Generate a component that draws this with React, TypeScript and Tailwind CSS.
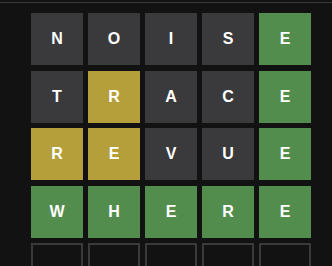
import React from "react"

type Mark = "absent" | "present" | "correct" | "empty"

const rows: { letter: string; mark: Mark }[][] = [
  [
    { letter: "N", mark: "absent" },
    { letter: "O", mark: "absent" },
    { letter: "I", mark: "absent" },
    { letter: "S", mark: "absent" },
    { letter: "E", mark: "correct" },
  ],
  [
    { letter: "T", mark: "absent" },
    { letter: "R", mark: "present" },
    { letter: "A", mark: "absent" },
    { letter: "C", mark: "absent" },
    { letter: "E", mark: "correct" },
  ],
  [
    { letter: "R", mark: "present" },
    { letter: "E", mark: "present" },
    { letter: "V", mark: "absent" },
    { letter: "U", mark: "absent" },
    { letter: "E", mark: "correct" },
  ],
  [
    { letter: "W", mark: "correct" },
    { letter: "H", mark: "correct" },
    { letter: "E", mark: "correct" },
    { letter: "R", mark: "correct" },
    { letter: "E", mark: "correct" },
  ],
  [
    { letter: "", mark: "empty" },
    { letter: "", mark: "empty" },
    { letter: "", mark: "empty" },
    { letter: "", mark: "empty" },
    { letter: "", mark: "empty" },
  ],
]

const tileStyle: Record<Mark, string> = {
  absent: "bg-[#3a3a3c]",
  present: "bg-[#b59f3b]",
  correct: "bg-[#538d4e]",
  empty: "border-2 border-[#3a3a3c]",
}

function Tile(props: { letter: string; mark: Mark }) {
  return (
    <div
      className={
        "flex h-[52px] w-[52px] items-center justify-center text-[16px] font-bold text-white " +
        tileStyle[props.mark]
      }
    >
      {props.letter}
    </div>
  )
}

export default function App() {
  return (
    <div
      className="h-[266px] w-[332px] overflow-hidden bg-[#121213]"
      style={{ fontFamily: '"Liberation Sans", Arial, sans-serif' }}
    >
      <div className="mt-[2px] h-px bg-[#3a3a3c]" />
      <div className="flex flex-col gap-y-[5.5px] pl-[31px] pt-[10px]">
        {rows.map((row, i) => (
          <div key={i} className="flex gap-x-[5px]">
            {row.map((t, j) => (
              <Tile key={j} letter={t.letter} mark={t.mark} />
            ))}
          </div>
        ))}
      </div>
    </div>
  )
}
